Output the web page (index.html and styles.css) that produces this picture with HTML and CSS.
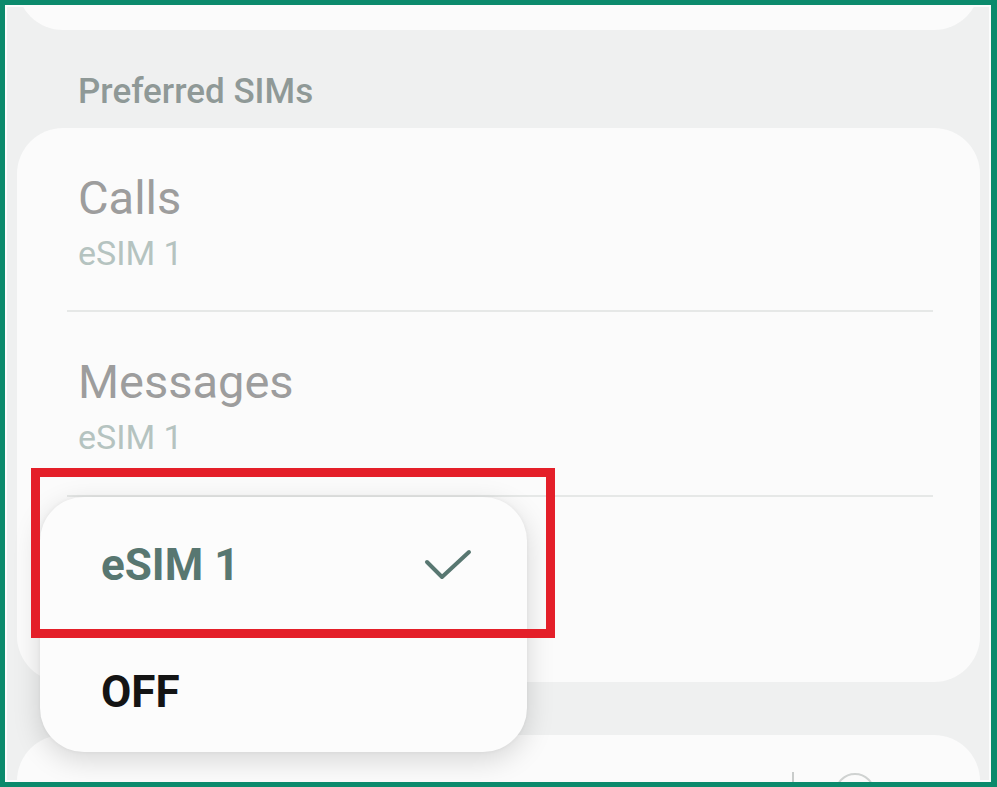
FILE: index.html
```html
<!DOCTYPE html>
<html lang="en">
<head>
<meta charset="utf-8">
<title>Preferred SIMs</title>
<link rel="stylesheet" href="styles.css">
</head>
<body>
<div class="frame">
  <div class="screen">
    <div class="card card-top"></div>
    <div class="section-label">Preferred SIMs</div>
    <div class="card card-main">
      <div class="row">
        <div class="row-title">Calls</div>
        <div class="row-sub">eSIM 1</div>
      </div>
      <div class="row">
        <div class="row-title">Messages</div>
        <div class="row-sub">eSIM 1</div>
      </div>
      <div class="row row-last"></div>
    </div>
    <div class="card card-bottom">
      <span class="vline"></span>
      <span class="switch"></span>
    </div>
  </div>

  <div class="popup">
    <div class="popup-item selected">
      <span>eSIM 1</span>
      <svg class="check" width="48" height="32" viewBox="0 0 48 32" aria-hidden="true">
        <polyline points="3,13 18,28 45,3" fill="none" stroke="#587771" stroke-width="4" stroke-linecap="round" stroke-linejoin="round"/>
      </svg>
    </div>
    <div class="popup-item">
      <span>OFF</span>
    </div>
  </div>

  <div class="highlight"></div>
</div>
</body>
</html>
```

FILE: styles.css
```css
* { box-sizing: border-box; }

html, body {
  margin: 0;
  padding: 0;
  width: 997px;
  height: 787px;
  overflow: hidden;
  background: #ffffff;
}

.frame {
  position: relative;
  width: 997px;
  height: 787px;
  border-style: solid;
  border-color: #0b8a6c;
  border-width: 5px 6px 5px 5px;
  background: #eff0f0;
  box-shadow: inset 0 0 0 2px #fbfcfc;
  overflow: hidden;
  font-family: Roboto, "Noto Sans", "Liberation Sans", sans-serif;
}

.screen {
  display: flex;
  flex-direction: column;
  padding: 0 11px 0 12px;
}

.card {
  background: #fbfbfb;
  border-radius: 46px;
}

.card-top {
  height: 100px;
  margin-top: -75px;
}

.section-label {
  margin-top: 41px;
  padding-left: 61px;
  font-size: 35px;
  line-height: 41px;
  color: #8f9997;
  font-weight: 500;
  height: 41px;
}

.card-main {
  margin-top: 16px;
  height: 554px;
  display: flex;
  flex-direction: column;
}

.row {
  height: 184px;
  margin: 0 47px 0 50px;
  padding: 43px 0 0 11px;
  border-bottom: 2px solid #e6e8e7;
}

.row + .row {
  height: 185px;
}

.row-last {
  border-bottom: none;
}

.row-title {
  font-size: 47px;
  line-height: 54px;
  color: #9d9d9d;
}

.row-sub {
  margin-top: 8px;
  font-size: 34px;
  line-height: 40px;
  color: #b5c3c0;
}

.card-bottom {
  margin-top: 53px;
  height: 120px;
  display: flex;
  align-items: flex-start;
  padding: 37px 0 0 775px;
}

.vline {
  width: 2px;
  height: 12px;
  background: #c9cccb;
}

.switch {
  margin-left: 41px;
  margin-top: 1px;
  width: 40px;
  height: 40px;
  border: 2px solid #cfd2d1;
  border-radius: 50%;
}

.popup {
  position: absolute;
  left: 35px;
  top: 492px;
  width: 487px;
  height: 255px;
  background: #fcfcfc;
  border-radius: 44px;
  box-shadow: 0 8px 28px rgba(0, 0, 0, 0.15), 0 0 4px rgba(0, 0, 0, 0.05);
  padding: 42px 55px 0 61px;
  display: flex;
  flex-direction: column;
}

.popup-item {
  display: flex;
  align-items: center;
  justify-content: space-between;
  height: 52px;
  font-size: 44px;
  line-height: 52px;
  font-weight: 700;
  color: #141414;
}

.popup-item.selected {
  color: #587771;
  margin-bottom: 75px;
}

.check {
  display: block;
}

.highlight {
  position: absolute;
  left: 26px;
  top: 463px;
  width: 524px;
  height: 170px;
  border: 9px solid #e41f29;
}
```
